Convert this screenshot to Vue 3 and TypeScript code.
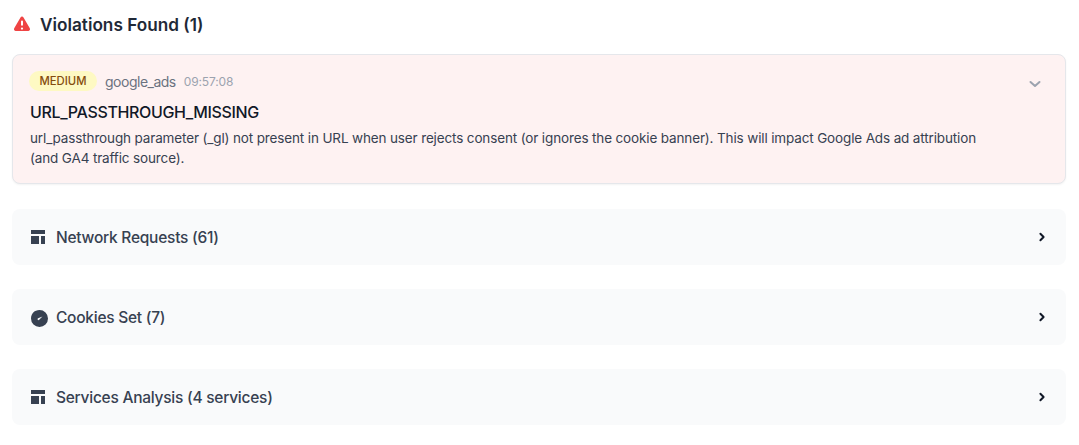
<script setup lang="ts">
interface Section { title: string; icon: 'table' | 'gauge' }
const sections: Section[] = [
  { title: 'Network Requests (61)', icon: 'table' },
  { title: 'Cookies Set (7)', icon: 'gauge' },
  { title: 'Services Analysis (4 services)', icon: 'table' },
]
</script>

<template>
  <main class="page">
    <header class="heading">
      <svg class="warn" viewBox="0 0 20 20" width="20" height="20" aria-hidden="true">
        <path fill="#ef4444" fill-rule="evenodd" d="M8.485 2.495c.673-1.167 2.357-1.167 3.03 0l6.28 10.875c.673 1.167-.17 2.625-1.516 2.625H3.720c-1.347 0-2.189-1.458-1.515-2.625L8.485 2.495zM10 5.500a1 1 0 0 1 1 1v3.200a1 1 0 0 1-2 0V6.500a1 1 0 0 1 1-1zm0 9.200a1.150 1.150 0 1 0 0-2.300 1.150 1.150 0 0 0 0 2.300z" />
      </svg>
      <h2>Violations Found (1)</h2>
    </header>

    <article class="violation">
      <div class="violation-body">
        <div class="meta">
          <span class="badge">MEDIUM</span>
          <span class="service">google_ads</span>
          <span class="time">09:57:08</span>
        </div>
        <h3>URL_PASSTHROUGH_MISSING</h3>
        <p>url_passthrough parameter (_gl) not present in URL when user rejects consent (or ignores the cookie banner). This will impact Google Ads ad attribution (and GA4 traffic source).</p>
      </div>
      <svg class="chev-down" viewBox="0 0 20 20" width="20" height="20" aria-hidden="true">
        <path fill="none" stroke="#9ca3af" stroke-width="2" stroke-linecap="round" stroke-linejoin="round" d="M5.500 8l4.500 4 4.500-4" />
      </svg>
    </article>

    <section v-for="s in sections" :key="s.title" class="row">
      <svg v-if="s.icon === 'table'" class="row-icon" viewBox="0 0 20 20" width="20" height="20" aria-hidden="true">
        <path fill="#374151" d="M1 3h14v4H1zM1 9h8v8H1zM11 9h4v8h-4z" />
      </svg>
      <svg v-else class="row-icon" viewBox="0 0 20 20" width="20" height="20" aria-hidden="true">
        <path fill="#374151" fill-rule="evenodd" d="M9.500 3a8.500 8.500 0 1 1-8.500 8.500c0-1.300.2-2.600 .8-3.700C2.600 6 4.200 4.200 6 3.700 7.100 3.200 8.300 3 9.500 3zM12.500 9.600l-4.400 1.600a1 1 0 1 0 1.300 1.400l3.100-3z" />
      </svg>
      <span class="row-title">{{ s.title }}</span>
      <svg class="chev-right" viewBox="0 0 20 20" width="20" height="20" aria-hidden="true">
        <path fill="none" stroke="#111827" stroke-width="2" stroke-linecap="round" stroke-linejoin="round" d="M8.400 6.800l3.200 3.200-3.200 3.200" />
      </svg>
    </section>
  </main>
</template>

<style>
html, body { margin: 0; background: #fff; }
</style>

<style scoped>
.page {
  box-sizing: border-box;
  width: 1079px;
  height: 445px;
  padding: 14px 13px 0 12px;
  overflow: hidden;
  font-family: Inter, "Open Sans", sans-serif;
  color: #1f2937;
}
.heading { display: flex; align-items: center; gap: 8px; height: 22px; margin-bottom: 18px; }
.warn { flex: none; }
h2 { margin: 0; font-size: 17.200px; line-height: 22px; font-weight: 600; color: #1f2937; }
.violation {
  box-sizing: border-box;
  display: flex;
  justify-content: space-between;
  height: 130px;
  padding: 16px 20px 0 16px;
  background: #fef2f2;
  border: 1px solid #e5e7eb;
  border-radius: 8px;
  box-shadow: 0 1px 2px rgba(0,0,0,.05);
}
.violation-body { width: 960px; }
.meta { display: flex; align-items: center; height: 20px; }
.badge {
  box-sizing: border-box;
  height: 20px;
  padding: 0 10.500px;
  border-radius: 10px;
  background: #fef9c3;
  color: #854d0e;
  font-size: 11.300px;
  line-height: 20px;
  font-weight: 500;
}
.service { margin-left: 8px; font-size: 14px; letter-spacing: -.5px; color: #6b7280; }
.time { margin-left: 8px; font-size: 12px; letter-spacing: -.15px; color: #9ca3af; }
h3 { margin: 11px 0 0 1px; font-size: 16px; line-height: 20px; font-weight: 500; letter-spacing: -.35px; color: #111827; }
p { margin: 6px 0 0 1px; font-size: 13.500px; line-height: 20px; letter-spacing: -.14px; color: #374151; }
.chev-down { margin-top: 3px; flex: none; }
.row {
  display: flex;
  align-items: center;
  height: 56px;
  margin-top: 24px;
  padding: 0 14px 0 18px;
  background: #f9fafb;
  border-radius: 8px;
}
.violation + .row { margin-top: 25px; }
.row-icon { flex: none; margin-right: 6px; }
.row-title { flex: 1; font-size: 15.500px; letter-spacing: -.25px; font-weight: 500; color: #374151; }
.chev-right { flex: none; }
</style>
